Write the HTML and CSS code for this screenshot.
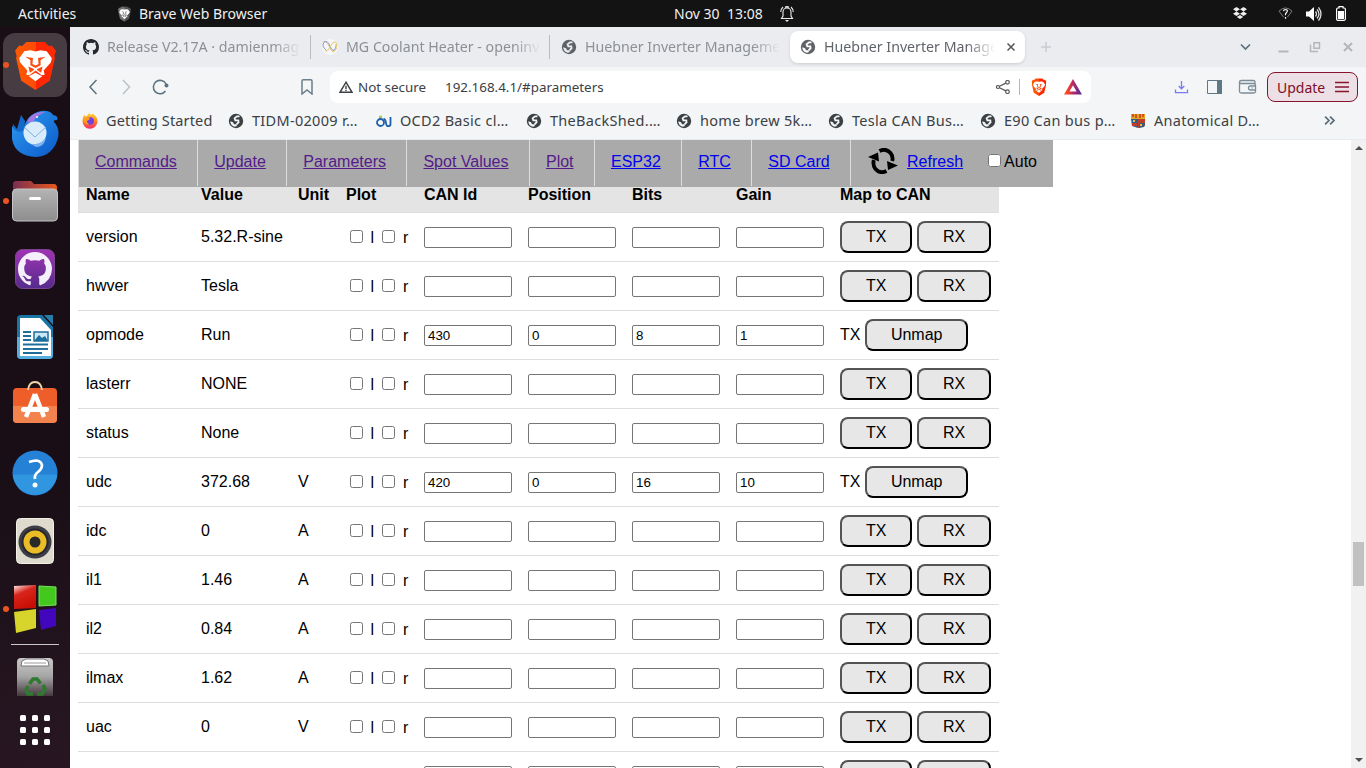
FILE: index.html
```html
<!DOCTYPE html>
<html lang="en">
<head>
<meta charset="utf-8">
<title>Huebner Inverter Management Console</title>
<link rel="stylesheet" href="styles.css">
</head>
<body>
<svg class="defs" aria-hidden="true">
  <defs>
    <linearGradient id="gBrave" x1="0" x2="1"><stop offset="0" stop-color="#ff5a00"/><stop offset=".5" stop-color="#ff4a08"/><stop offset=".52" stop-color="#ff2504"/><stop offset="1" stop-color="#ff2a00"/></linearGradient>
    <linearGradient id="gBird" x1="0" y1="0" x2="1" y2="1"><stop offset="0" stop-color="#2f9df2"/><stop offset="1" stop-color="#0b58c8"/></linearGradient>
    <linearGradient id="gFolder" x1="0" x2="1"><stop offset="0" stop-color="#7b2d52"/><stop offset="1" stop-color="#e9591c"/></linearGradient>
    <linearGradient id="gGrey" x2="0" y2="1"><stop offset="0" stop-color="#b4b4b4"/><stop offset="1" stop-color="#8d8d8d"/></linearGradient>
    <linearGradient id="gPurple" x2="0" y2="1"><stop offset="0" stop-color="#a035b5"/><stop offset="1" stop-color="#562b8c"/></linearGradient>
    <linearGradient id="gTrash" x2="0" y2="1"><stop offset="0" stop-color="#c9c9c9"/><stop offset=".5" stop-color="#a4a4a4"/><stop offset="1" stop-color="#46383f"/></linearGradient>
    <linearGradient id="gRed" x2=".4" y2="1"><stop offset="0" stop-color="#fff0ee"/><stop offset=".4" stop-color="#d8251c"/><stop offset="1" stop-color="#c80f05"/></linearGradient>
    <linearGradient id="gFire" x2="0" y2="1"><stop offset="0" stop-color="#ffd53c"/><stop offset=".5" stop-color="#ff8a1c"/><stop offset="1" stop-color="#f6286d"/></linearGradient>
    <linearGradient id="gTri" x1="0" x2="1"><stop offset="0" stop-color="#ff4724"/><stop offset=".5" stop-color="#b72a64"/><stop offset="1" stop-color="#662d91"/></linearGradient>
    <symbol id="globe" viewBox="0 0 16 16"><circle cx="8" cy="8" r="7.2"/><path fill="none" stroke="var(--hole)" stroke-width="1.800" d="M11.500 3.300H9L6.600 5.300 7.300 7.300H10.300L10.600 9.200 8.600 11.300"/><path fill="var(--hole)" d="M2.200 8.300 5 9.200 6 11.200 9 11.300 8.600 13.300 6.800 13.800Q2.600 12.800 2.200 8.300z"/></symbol>
    <symbol id="cat" viewBox="0 0 16 16"><path d="M8 0C3.58 0 0 3.58 0 8c0 3.54 2.29 6.53 5.47 7.59.4.07.55-.17.55-.38 0-.19-.01-.82-.01-1.49-2.01.37-2.53-.49-2.69-.94-.09-.23-.48-.94-.82-1.13-.28-.15-.68-.52-.01-.53.63-.01 1.08.58 1.23.82.72 1.21 1.87.87 2.33.66.07-.52.28-.87.51-1.07-1.78-.2-3.64-.89-3.64-3.95 0-.87.31-1.59.82-2.15-.08-.2-.36-1.02.08-2.12 0 0 .67-.21 2.2.82a7.6 7.6 0 0 1 4 0c1.53-1.04 2.2-.82 2.2-.82.44 1.1.16 1.92.08 2.12.51.56.82 1.27.82 2.15 0 3.07-1.87 3.75-3.65 3.95.29.25.54.73.54 1.48 0 1.07-.01 1.93-.01 2.2 0 .21.15.46.55.38A8.01 8.01 0 0 0 16 8c0-4.42-3.58-8-8-8z"/></symbol>
    <symbol id="lion" viewBox="0 0 40 48"><path class="shield" d="M11 1h18l4 4 3-.5 4 5-1.500 5L39 17l-5 22-14 9L6 39 1 17l.5-2.500L0 9.500l4-5L7 5z"/><path class="face" d="m9 10 6-1 5 1.200L25 9l6 1 5 7-1 4-7 8 1 4-3 .5-6-4.500-6 4.500-3-.5 1-4-7-8-1-4zM20 31l6.500 3.500L20 39.500l-6.500-5z"/><path class="shade" d="m10 15.500 7.500 1.200L17 22.500l3 1.500 3-1.500-.5-5.800 7.500-1.200-5 3.200 0 5L20 26.500l-5-2.800 0-5zM13 25l5.500 2.500v1L14.500 31zM27 25l-5.500 2.500v1l4 2.500z"/></symbol>
  </defs>
</svg>

<header class="topbar">
  <span class="activities">Activities</span>
  <svg class="top-lion" viewBox="0 0 40 48"><use href="#lion"/></svg>
  <span class="app-name">Brave Web Browser</span>
  <span class="clock">Nov 30&nbsp; 13:08</span>
  <svg class="bell" viewBox="0 0 14 16" fill="none" stroke="#eee" stroke-width="1.100"><path d="M1.500 12.500h11L11 10V6a4 4 0 0 0-8 0v4zM.8 6Q.8 3 3 1M13.200 6Q13.200 3 11 1M5 1.200Q7 0 9 1.200"/><path fill="#eee" stroke="none" d="M5 14h4l-2 2z"/></svg>
  <svg class="dropbox" viewBox="0 0 14 13" fill="#eee"><path d="m3.500 0 3.500 2.200-3.500 2.200L0 2.200zM10.500 0 14 2.200l-3.500 2.200L7 2.200zM3.500 4.500 7 6.700 3.500 8.900 0 6.700zM10.500 4.500 14 6.700l-3.500 2.200L7 6.700zM3.800 10 7 8l3.200 2L7 12z"/></svg>
  <svg class="wifi" viewBox="0 0 16 14" fill="none"><path stroke="#888" d="M6 11 1 4.500Q8-2.500 15 4.500L10 11"/><path stroke="#fff" stroke-width="1.300" d="M5.800 4.500Q6 2.700 8.300 2.700 10.800 3.300 9.600 5.300L8 7.500V9M8 10.800v1.800"/></svg>
  <svg class="volume" viewBox="0 0 16 16"><path fill="#fff" d="M0 5.500h3L8 1v14l-5-4.500H0z"/><path fill="none" stroke="#ddd" stroke-width="1.300" d="M9.500 5.500q2 2.500 0 5M11 3.500q4 4.500 0 9M12.500 1.300q5 6.700 0 13.400"/></svg>
  <svg class="battery" viewBox="0 0 10 15"><path fill="none" stroke="#fff" stroke-width="1.200" d="M3 2V.6h4V2h1.200q1.200 0 1.200 1.200v9.600q0 1.500-1.200 1.500H1.800Q.6 14.300.6 12.800V3.200Q.6 2 1.800 2z"/><path fill="#fff" d="M2 5h6v8H2z"/></svg>
</header>

<div class="desktop">
  <aside class="dock">
    <div class="slot current running"><svg class="i-brave" viewBox="0 0 40 48"><use href="#lion"/></svg></div>
    <div class="slot bird"><svg width="48" height="48" viewBox="0 0 48 48"><path fill="#1368c9" d="M1 24 2 14 6 19 10 5l4 6-1 11z"/><path fill="url(#gBird)" d="M1 16Q5 24 12 21 15 4 30 1q9-1 12 4 6 1 4 5-4 0-3 2 6 6 4 16-5 18-22 19Q4 46 1 29z"/><path fill="#a178e4" d="M17 10Q22 1 34 2q-9 4-11 9l-6 2z"/><circle cx="24" cy="23" r="11.500" fill="#d9ecfb"/><path fill="none" stroke="#87aed3" d="m14 18 10 9 11-10"/><path fill="#7fb4f0" d="M18 33q8 4 17-5-2 9-10 9z"/><circle cx="26" cy="7" r="1" fill="#fff"/></svg></div>
    <div class="slot running"><svg width="46" height="42" viewBox="0 0 46 42"><path fill="url(#gFolder)" d="M1 4q0-3 3-3h15l3 3h20q3 0 3 4v15H1z"/><rect x=".5" y="9" width="45" height="32" rx="4" fill="url(#gGrey)" stroke="#c5c5c5"/><rect x="17" y="17" width="12" height="3" rx="1.500" fill="#fff"/></svg></div>
    <div class="slot"><svg width="40" height="40" viewBox="0 0 40 40"><rect x=".5" y=".5" width="39" height="39" rx="7" fill="url(#gPurple)" stroke="#7b4290"/><svg x="3" y="3" width="34" height="34" fill="#f4effa"><use href="#cat"/></svg></svg></div>
    <div class="slot"><svg width="38" height="46" viewBox="0 0 38 46"><path fill="#1a75a7" d="M5 1h21l11 12v28q0 4-4 4H5q-4 0-4-4V5q0-4 4-4z"/><path fill="#55aee0" d="M1 23h36v18q0 4-4 4H5q-4 0-4-4z"/><path fill="#fff" d="M4 4h20l11 12v26H4z"/><path fill="#2a7da9" d="M28 1h9v10z"/><path stroke="#1d6e9c" stroke-width="2" d="M7 18h8M7 22h8M7 26h8M7 30.500h25M7 35h25M7 39h19"/><path fill="#cce8f5" stroke="#1d6e9c" stroke-width="1.500" d="M18 18h14v9H18z"/><path fill="#1d6e9c" d="m18 27 5-6 3 3 3-2 3 5z"/></svg></div>
    <div class="slot store"><svg width="46" height="43" viewBox="0 0 46 43"><rect x="1" y="7" width="44" height="35" rx="4" fill="#ed5e2b"/><path fill="#f2834f" d="M1 25h44v13q0 4-4 4H5q-4 0-4-4z"/><path fill="none" stroke="#f5d7a5" stroke-width="1.800" d="M16 9Q17 1 23 1t7 8"/><path fill="none" stroke="#fff" stroke-width="4.500" d="m23 13-9 23M23 13l9 23"/><rect x="9" y="26" width="28" height="5" rx="2.500" fill="#fff"/></svg></div>
    <div class="slot"><svg width="46" height="46" viewBox="0 0 46 46"><circle cx="23" cy="23" r="22.500" fill="#2481d5"/><path fill="#3096df" d="M.8 24.500h44.400A22.300 22.300 0 0 1 .8 24.500z"/><path fill="none" stroke="#fff" stroke-width="2.700" d="M17 12q11-4 13 3 0 4-4 7-4 3-3 7"/><circle cx="23" cy="35" r="2.500" fill="#fff"/></svg></div>
    <div class="slot"><svg width="38" height="46" viewBox="0 0 38 46"><rect x=".5" y=".5" width="37" height="45" rx="4" fill="#dedace" stroke="#f3f0e7"/><circle cx="19" cy="24" r="16.500" fill="#3c3d45"/><circle cx="19" cy="24" r="13.500" fill="#262730"/><circle cx="19" cy="24" r="11.500" fill="#eabd27"/><circle cx="19" cy="24" r="5.500" fill="#292929"/></svg></div>
    <div class="slot running"><svg width="44" height="48" viewBox="0 0 44 48"><path fill="url(#gRed)" d="M1 1 23 0v23L1 24z"/><path fill="#43c91e" stroke="#7be463" d="m26 1 17 1v18l-17 1z"/><path fill="#d7d42b" d="M1 27 23 24v19L3 48z"/><path fill="#4207bc" d="m26 25 17-2v18l-15 4z"/></svg></div>
    <div class="dock-line"></div>
    <div class="slot trash"><svg width="38" height="40" viewBox="0 0 38 40"><path fill="url(#gTrash)" d="M1 5q0-4 4-4h28q4 0 4 4v34H1z"/><path fill="#fff" stroke="#777" d="m6 4 4-2h18l4 2 1 5H5z"/><path stroke="#999" d="M8 6h22"/><g fill="none" stroke="#2f7a2f" stroke-width="3.600"><path d="m13.500 27 3.500-5h4l3.500 4.500M27 28l2 4-3 5h-5M17 37h-5l-2-4 2-4"/></g></svg></div>
    <svg class="apps" width="32" height="32" viewBox="0 0 32 32" fill="#fff"><rect x="1" y="1" width="6" height="6" rx="1.500"/><rect x="13" y="1" width="6" height="6" rx="1.500"/><rect x="25" y="1" width="6" height="6" rx="1.500"/><rect x="1" y="13" width="6" height="6" rx="1.500"/><rect x="13" y="13" width="6" height="6" rx="1.500"/><rect x="25" y="13" width="6" height="6" rx="1.500"/><rect x="1" y="25" width="6" height="6" rx="1.500"/><rect x="13" y="25" width="6" height="6" rx="1.500"/><rect x="25" y="25" width="6" height="6" rx="1.500"/></svg>
  </aside>

  <main class="browser">
    <div class="tabs">
      <div class="tab t1"><svg class="fav" viewBox="0 0 16 16" fill="#24292f"><use href="#cat"/></svg><span class="tab-title">Release V2.17A · damienmag</span></div>
      <div class="tab t2"><svg class="fav" viewBox="0 0 16 16" fill="none"><circle cx="8" cy="8" r="8" fill="#f7f7f7"/><path stroke="#efb08c" d="M1 3q3-2 6 4t4 5 4-3"/><path stroke="#799ccd" d="M5 12Q-1 7 2 3.500t6 3.500 5 3 1-5"/><path stroke="#eacb69" d="M3 12Q6 13 8 8t5-5 1 6-4 3"/></svg><span class="tab-title">MG Coolant Heater - openinv</span></div>
      <div class="tab t3"><svg class="fav" fill="#5f6368"><use href="#globe"/></svg><span class="tab-title">Huebner Inverter Manageme</span></div>
      <div class="tab active"><svg class="fav" fill="#5f6368"><use href="#globe"/></svg><span class="tab-title">Huebner Inverter Manage</span><svg class="tab-x" viewBox="0 0 8 8" stroke="#555" stroke-width="1.500"><path d="m.5.500 7 7m0-7-7 7"/></svg></div>
      <svg class="plus" viewBox="0 0 10 10" stroke="#c7cace" stroke-width="1.500"><path d="M5 0v10M0 5h10"/></svg>
      <svg class="wctl" viewBox="0 0 110 14" fill="none"><path stroke="#5b6f7b" stroke-width="1.700" d="m1 4.500 4.500 4.500L10 4.500"/><path stroke="#b4b6b9" stroke-width="2" d="M38.500 11.500h10"/><path stroke="#b4b6b9" stroke-width="1.500" d="M74 2.700h5.500v5.500H74zM70.500 4.500v7H78"/><path stroke="#b4b6b9" stroke-width="2" d="m104 3 8 8m0-8-8 8"/></svg>
    </div>

    <div class="toolbar">
      <svg class="navbtns" viewBox="0 0 84 16" fill="none" stroke="#5b7280" stroke-width="1.500"><path d="M8.500 1 2 8 8.500 15"/><path stroke="#b9c3ca" d="m35 1 6.500 7L35 15"/><path d="M78 5A6.700 6.700 0 1 0 77.500 12"/><circle cx="78.500" cy="6.500" r="2" fill="#5b7280" stroke="none"/></svg>
      <svg class="mark" viewBox="0 0 12 16" fill="none" stroke="#6b7f8b" stroke-width="1.500"><path d="M1 2q0-1.200 1.200-1.200h7.600Q11 .8 11 2v13l-5-4-5 4z"/></svg>
      <div class="url">
        <svg class="warn" viewBox="0 0 14 12" fill="none" stroke="#3c4043" stroke-width="1.400"><path d="M7 1.200 13 11.300H1zM7 4.800v3.200M7 8.800v1.200"/></svg>
        <span class="insecure">Not secure</span>
        <span class="address">192.168.4.1/#parameters</span>
        <svg class="share" viewBox="0 0 14 14" fill="none" stroke="#555" stroke-width="1.200"><circle cx="2" cy="7" r="1.500"/><circle cx="11.500" cy="2.300" r="1.800"/><circle cx="11.500" cy="11.700" r="1.800"/><path d="m3.500 6.300 6.300-3.200M3.500 7.700l6.300 3.200"/></svg>
        <i class="url-line"></i>
        <svg class="url-lion" viewBox="0 0 40 48"><use href="#lion"/></svg>
        <svg class="bat" viewBox="0 0 18 16"><path fill="none" stroke="url(#gTri)" stroke-width="3.200" d="M9 3.200 15.300 14H2.700z"/></svg>
      </div>
      <svg class="tools" viewBox="0 0 82 16" fill="none"><path stroke="#7b7af2" stroke-width="1.300" d="M7.500 2v7.500M4.700 7l2.800 2.800L10.300 7M1.500 10.500v3.200h12v-3.200"/><path stroke="#607784" d="M33.500 1.500h14v13h-14z"/><path fill="#607784" d="M43 1h5v14h-5z"/><path stroke="#7b8d98" stroke-width="1.300" d="M81 5V3q0-1.500-1.500-1.500h-12q-2 0-2 1.500t2 1.500h12q2 0 2 1.500v6.500q0 1.500-2 1.500h-12q-2 0-2-1.500V3M81.500 7h-5q-2 0-2 2t2 2h5M77.500 9h1"/></svg>
      <div class="update"><span>Update</span><svg viewBox="0 0 14 12" stroke="#87142e" stroke-width="1.300"><path d="M0 1.500h14M0 6h14M0 10.500h14"/></svg></div>
    </div>

    <div class="bookmarks">
      <div class="bm first w147"><svg class="bi" viewBox="0 0 16 16"><path fill="url(#gFire)" d="M1 4.500 2 2l2 1.500Q6 2.300 7 0l2 2 1.500-1.500q5 3 5 8A7.500 7.500 0 1 1 .5 8z"/><circle cx="8.300" cy="8" r="3.700" fill="#773ee0"/><path fill="#ff9d20" d="M3 5q4-2 5 1L5 8q0 3 3 3-5 1-6-3z"/></svg><span>Getting Started</span></div>
      <div class="bm w148"><svg class="bi" fill="#3c4043"><use href="#globe"/></svg><span>TIDM-02009 r…</span></div>
      <div class="bm w150"><svg class="bi" viewBox="0 0 16 16" fill="none" stroke="#1e5faa" stroke-width="1.800"><circle cx="4.500" cy="9.500" r="3.500"/><path d="M7.500 6q2 0 2.500 4t3 3q1.500 0 1.500-2V4"/><path stroke="#a4cf52" d="M3 4h3M4.500 2.500v2"/></svg><span>OCD2 Basic cl…</span></div>
      <div class="bm w151"><svg class="bi" fill="#3c4043"><use href="#globe"/></svg><span>TheBackShed.…</span></div>
      <div class="bm w152"><svg class="bi" fill="#3c4043"><use href="#globe"/></svg><span>home brew 5k…</span></div>
      <div class="bm w152"><svg class="bi" fill="#3c4043"><use href="#globe"/></svg><span>Tesla CAN Bus…</span></div>
      <div class="bm w150"><svg class="bi" fill="#3c4043"><use href="#globe"/></svg><span>E90 Can bus p…</span></div>
      <div class="bm w200"><svg class="bi" viewBox="0 0 16 16"><path fill="#e3a31d" d="M1 1h14v6H1z"/><path stroke="#c73b22" stroke-width="1.500" d="M3 1v3M6 1v4M10 1v4M13 1v3"/><path fill="#285e95" d="M1 6h7v9L2 13z"/><path fill="#bd3c2a" d="M8 6h7v7l-7 2zM2 10h5v3H2z"/><path fill="#315d87" d="M9 10h6l-1 4-5 1z"/><path fill="#f1bb31" d="M3 7h2v2H3zM10 11h2v2h-2z"/></svg><span>Anatomical D…</span></div>
      <svg class="more" viewBox="0 0 10 8" fill="none" stroke="#5b6f7b" stroke-width="1.600"><path d="m1 .5 3.500 3.500L1 7.500M5.500.5 9 4 5.500 7.500"/></svg>
    </div>

    <div class="viewport">
      <div class="page">
        <nav class="menu">
          <a class="seen"><u>Commands</u></a><a class="seen"><u>Update</u></a><a class="seen"><u>Parameters</u></a><a class="seen"><u>Spot Values</u></a><a class="seen"><u>Plot</u></a><a><u>ESP32</u></a><a><u>RTC</u></a><a><u>SD Card</u></a>
          <div class="refresh"><svg viewBox="0 0 30 26"><g fill="none" stroke="#000" stroke-width="3.800"><path d="M11.500 3Q18-.2 22.500 5q3 3.700 1.700 8"/><path d="M18.500 23Q12 26.200 7.500 21q-3-3.700-1.700-9"/></g><path d="M0 9 10 4.500l1 9-3.500-1.500zM30 17.500 20 22l-1-9 3.500 1.500z"/></svg><a><u>Refresh</u></a></div>
          <label class="auto"><input type="checkbox">Auto</label>
        </nav>
        <table class="params">
          <colgroup><col class="c-name"><col class="c-value"><col class="c-unit"><col class="c-plot"><col class="c-in"><col class="c-in"><col class="c-in"><col class="c-in"><col class="c-map"></colgroup>
          <thead><tr><th>Name</th><th>Value</th><th>Unit</th><th>Plot</th><th>CAN Id</th><th>Position</th><th>Bits</th><th>Gain</th><th>Map to CAN</th></tr></thead>
          <tbody>
            <tr><td>version</td><td>5.32.R-sine</td><td></td><td><input type="checkbox"> l <input type="checkbox"> r</td><td><input type="text"></td><td><input type="text"></td><td><input type="text"></td><td><input type="text"></td><td><button>TX</button> <button>RX</button></td></tr>
            <tr><td>hwver</td><td>Tesla</td><td></td><td><input type="checkbox"> l <input type="checkbox"> r</td><td><input type="text"></td><td><input type="text"></td><td><input type="text"></td><td><input type="text"></td><td><button>TX</button> <button>RX</button></td></tr>
            <tr><td>opmode</td><td>Run</td><td></td><td><input type="checkbox"> l <input type="checkbox"> r</td><td><input type="text" value="430"></td><td><input type="text" value="0"></td><td><input type="text" value="8"></td><td><input type="text" value="1"></td><td>TX <button>Unmap</button></td></tr>
            <tr><td>lasterr</td><td>NONE</td><td></td><td><input type="checkbox"> l <input type="checkbox"> r</td><td><input type="text"></td><td><input type="text"></td><td><input type="text"></td><td><input type="text"></td><td><button>TX</button> <button>RX</button></td></tr>
            <tr><td>status</td><td>None</td><td></td><td><input type="checkbox"> l <input type="checkbox"> r</td><td><input type="text"></td><td><input type="text"></td><td><input type="text"></td><td><input type="text"></td><td><button>TX</button> <button>RX</button></td></tr>
            <tr><td>udc</td><td>372.68</td><td>V</td><td><input type="checkbox"> l <input type="checkbox"> r</td><td><input type="text" value="420"></td><td><input type="text" value="0"></td><td><input type="text" value="16"></td><td><input type="text" value="10"></td><td>TX <button>Unmap</button></td></tr>
            <tr><td>idc</td><td>0</td><td>A</td><td><input type="checkbox"> l <input type="checkbox"> r</td><td><input type="text"></td><td><input type="text"></td><td><input type="text"></td><td><input type="text"></td><td><button>TX</button> <button>RX</button></td></tr>
            <tr><td>il1</td><td>1.46</td><td>A</td><td><input type="checkbox"> l <input type="checkbox"> r</td><td><input type="text"></td><td><input type="text"></td><td><input type="text"></td><td><input type="text"></td><td><button>TX</button> <button>RX</button></td></tr>
            <tr><td>il2</td><td>0.84</td><td>A</td><td><input type="checkbox"> l <input type="checkbox"> r</td><td><input type="text"></td><td><input type="text"></td><td><input type="text"></td><td><input type="text"></td><td><button>TX</button> <button>RX</button></td></tr>
            <tr><td>ilmax</td><td>1.62</td><td>A</td><td><input type="checkbox"> l <input type="checkbox"> r</td><td><input type="text"></td><td><input type="text"></td><td><input type="text"></td><td><input type="text"></td><td><button>TX</button> <button>RX</button></td></tr>
            <tr><td>uac</td><td>0</td><td>V</td><td><input type="checkbox"> l <input type="checkbox"> r</td><td><input type="text"></td><td><input type="text"></td><td><input type="text"></td><td><input type="text"></td><td><button>TX</button> <button>RX</button></td></tr>
            <tr><td></td><td></td><td></td><td></td><td><input type="text"></td><td><input type="text"></td><td><input type="text"></td><td><input type="text"></td><td><button>TX</button> <button>RX</button></td></tr>
          </tbody>
        </table>
      </div>
      <div class="scrollbar"><i class="up"></i><i class="thumb"></i><i class="down"></i></div>
    </div>
  </main>
</div>
</body>
</html>
```
FILE: styles.css
```css
* { box-sizing: border-box; }
html, body { margin: 0; height: 768px; overflow: hidden; }
body { font-family: "Noto Sans", sans-serif; font-size: 14px; background: #fff; }
svg { display: block; flex: none; }
.defs { position: absolute; width: 0; height: 0; }
.shield { fill: url(#gBrave); }
.face { fill: #fff; }
.shade { fill: #ff4a10; }

.topbar { display: flex; align-items: center; height: 27px; background: #131313; color: #f0f0f0; white-space: nowrap; }
.activities { width: 100px; padding-left: 18px; }
.top-lion { width: 13px; height: 16px; margin: 0 8px 0 18px; filter: grayscale(1); }
.app-name { width: 535px; }
.clock { width: 106px; }
.bell { width: 14px; height: 16px; margin-right: 439px; }
.dropbox { width: 14px; height: 13px; margin-right: 31px; }
.wifi { width: 15px; height: 13px; margin-right: 13px; }
.volume { width: 16px; height: 16px; margin-right: 14px; }
.battery { width: 10px; height: 15px; }

.desktop { display: flex; height: 741px; }
.dock { width: 70px; flex: none; background: linear-gradient(170deg, #190e16 0%, #190e16 60%, #281722 100%); padding-top: 6px; }
.slot { position: relative; display: flex; align-items: center; justify-content: center; width: 64px; height: 64px; margin: 0 3px 4px; border-radius: 12px; }
.current { background: #463c42; }
.i-brave { width: 41px; height: 49px; }
.bird { padding-top: 1px; }
.store { padding-bottom: 5px; }
.running::before { content: ""; position: absolute; left: 0; top: 29px; width: 6px; height: 6px; border-radius: 50%; background: #e95420; }
.dock-line { height: 1px; background: #ccc8ca; margin: -1px 11px 0; }
.trash { margin-bottom: 5px; padding-bottom: 1px; }
.apps { margin: 0 auto; }

.browser { flex: 1; min-width: 0; display: flex; flex-direction: column; background: #f3f5f7; }
.tabs { display: flex; align-items: center; height: 40px; background: #ebecf0; color: #8c9095; font-size: 14.2px; }
.tab { display: flex; align-items: center; gap: 8px; height: 24px; padding-left: 12px; white-space: nowrap; flex: none; }
.tab-title { flex: 1; min-width: 0; margin-top: -1px; -webkit-mask-image: linear-gradient(90deg, #000 calc(100% - 28px), transparent); mask-image: linear-gradient(90deg, #000 calc(100% - 28px), transparent); }
.fav { width: 16px; height: 16px; --hole: #ebecf0; }
.t1 { width: 241px; border-right: 1px solid #b9bbbf; padding-right: 9px; padding-left: 13px; }
.t2 { width: 239px; border-right: 1px solid #b9bbbf; padding-right: 8px; padding-left: 11px; }
.t3 { width: 240px; padding-right: 10px; padding-left: 11px; }
.active { width: 235px; height: 32px; padding: 0 10px 0 10px; border-radius: 8px; background: #fff; color: #606469; box-shadow: 0 1px 3px #0002; }
.active .fav { --hole: #fff; }
.tab-x { width: 8px; height: 8px; margin: 0 0 0 4px; }
.plus { width: 10px; height: 10px; margin-left: 16px; }
.wctl { width: 110px; height: 14px; margin-left: 189px; overflow: visible; }

.toolbar { display: flex; align-items: center; height: 40px; flex: none; }
.navbtns { width: 84px; height: 16px; margin-left: 18px; overflow: visible; }
.mark { width: 12px; height: 16px; margin-left: 129px; }
.url { display: flex; align-items: center; width: 761px; height: 32px; margin-left: 17px; padding-left: 9px; border-radius: 8px; background: #fff; color: #3c4043; white-space: nowrap; font-size: 13.4px; flex: none; }
.warn { width: 14px; height: 12px; margin-right: 5px; }
.insecure { width: 87px; }
.address { width: 551px; }
.share { width: 14px; height: 14px; }
.url-line { width: 1px; height: 16px; background: #b3b5b8; margin: 0 11px 0 9px; }
.url-lion { width: 16px; height: 18px; margin-right: 17px; }
.bat { width: 18px; height: 16px; }
.tools { width: 82px; height: 16px; margin-left: 83px; overflow: visible; }
.update { display: flex; align-items: center; gap: 10px; width: 91px; height: 30px; margin-left: 11px; padding-left: 9px; border: 1px solid #87142e; border-radius: 8px; background: #ecdfe5; color: #7d1029; font-size: 14px; flex: none; }
.update svg { width: 14px; height: 12px; }

.bookmarks { display: flex; align-items: center; height: 33px; padding: 0 0 5px 12px; border-bottom: 1px solid #e9eaec; color: #3c4043; font-size: 14.5px; letter-spacing: .3px; flex: none; }
.bm { display: flex; align-items: center; gap: 8px; flex: none; white-space: nowrap; line-height: 20px; }
.bm span { margin-top: -2px; }
.first { letter-spacing: .15px; }
.bi { width: 16px; height: 16px; --hole: #f3f5f7; }
.w147 { width: 146px; } .w148 { width: 148px; } .w150 { width: 150px; } .w151 { width: 150px; } .w152 { width: 152px; } .w200 { width: 194px; }
.more { width: 11px; height: 9px; }

.viewport { flex: 1; min-height: 0; display: flex; background: #fff; overflow: hidden; font-family: "Liberation Sans", Arial, sans-serif; font-size: 16px; color: #000; }
.page { flex: 1; padding-left: 8px; overflow: hidden; }
.menu { display: flex; width: 975px; height: 47px; background: #aaa; border-left: 1px solid #ddd; white-space: nowrap; }
.menu > a { height: 46px; padding: 13px 20.45px 0 16px; border-right: 1px solid #ddd; line-height: 18px; }
.menu a { color: #00e; }
.menu .seen { color: #551a8b; }
.refresh { display: flex; padding: 13px 0 0 17px; line-height: 18px; }
.refresh svg { width: 30px; height: 26px; margin: -5px 9px 0 0; }
.auto { padding: 11px 0 0 21px; line-height: 18px; }
.auto input { margin: 3px 3px 3px 4px; }
.params { width: 921px; table-layout: fixed; border-collapse: separate; border-spacing: 0; }
.c-name { width: 115px; } .c-value { width: 97px; } .c-unit { width: 48px; } .c-plot { width: 78px; } .c-in { width: 104px; } .c-map { width: 167px; }
th { height: 26px; padding: 0 8px 9px; text-align: left; line-height: 16px; background: #e4e4e4; border-bottom: 1px solid #ddd; white-space: nowrap; }
td { height: 49px; padding: 8px; border-bottom: 1px solid #ddd; white-space: nowrap; line-height: 18px; }
input[type="text"] { width: 88px; height: 21px; padding: 1px 2px 1px 3px; border: 1px solid #767676; border-radius: 2px; font: 13.333px "Liberation Sans", Arial, sans-serif; }
button { height: 32px; padding: 0 24px; border: 2px outset #000; border-radius: 8px; background: #e7e7e7; color: #000; font: 16px "Liberation Sans", Arial, sans-serif; }

.scrollbar { width: 15px; flex: none; display: flex; flex-direction: column; align-items: center; background: #f1f1f1; }
.up, .down { border: 4px solid transparent; }
.up { border-top: 0; border-bottom: 4px solid #505050; margin-top: 6px; }
.thumb { width: 11px; height: 44px; margin: 392px 0 172px; background: #c1c1c1; }
.down { border-bottom: 0; border-top: 4px solid #505050; }
```
